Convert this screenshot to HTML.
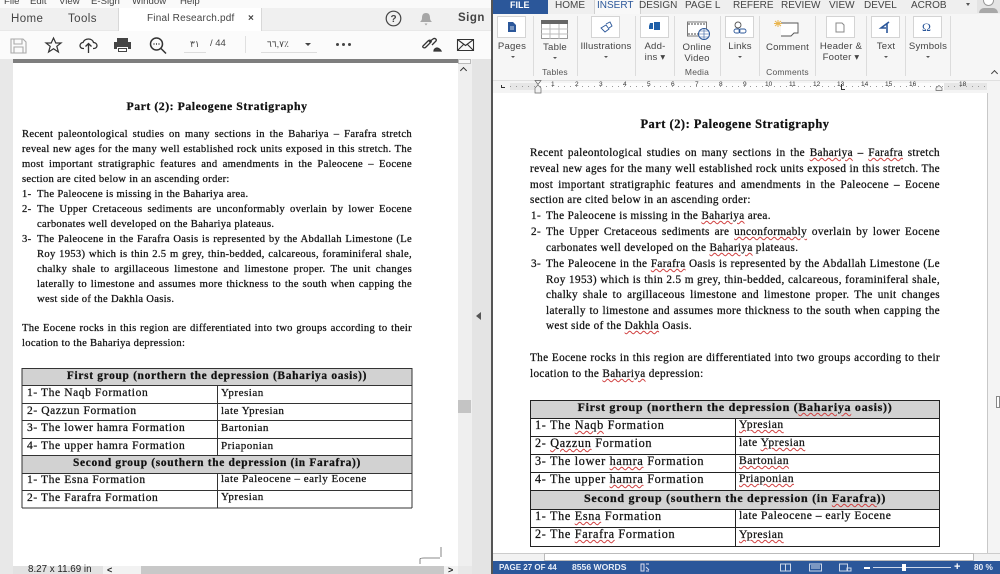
<!DOCTYPE html>
<html><head><meta charset="utf-8"><style>
html,body{margin:0;padding:0;width:1000px;height:574px;overflow:hidden;background:#fff}
body{filter:blur(.3px)}
*{box-sizing:border-box}
.a{position:absolute}
.s{position:absolute;font-family:"Liberation Sans",sans-serif;white-space:nowrap;color:#444}
.t{position:absolute;font-family:"Liberation Serif",serif;white-space:nowrap;color:#111;-webkit-text-stroke:.25px #111}
.L{font-size:10.6px;line-height:14px;letter-spacing:.3px}
.R{font-size:11.2px;line-height:14px;letter-spacing:.35px}
.TL1{font-size:11.5px;line-height:14px;letter-spacing:.6px}
.TL2{font-size:11px;line-height:14px;letter-spacing:.5px}
.HL{font-size:11.4px;line-height:14px;letter-spacing:.68px;font-weight:bold;text-align:center}
.TR1{font-size:12.2px;line-height:14px;letter-spacing:.68px}
.TR2{font-size:11.6px;line-height:14px;letter-spacing:.48px}
.HR{font-size:12px;line-height:14px;letter-spacing:.69px;font-weight:bold;text-align:center}
.j{text-align:justify;text-align-last:justify;white-space:normal}
.c{text-align:center}
.b{font-weight:bold}
u{text-decoration:underline wavy #d04040 .5px;text-underline-offset:1px}
.rb{position:absolute;font-family:"Liberation Sans",sans-serif;font-size:9.6px;color:#444;text-align:center;line-height:11px;letter-spacing:.2px;white-space:nowrap}
.box{position:absolute;top:16px;width:29px;height:22px;background:#fff;border:1px solid #d4d4d4}
.sep{position:absolute;top:16px;width:1px;height:60px;background:#dcdcdc}
.tab{position:absolute;top:0;font-family:"Liberation Sans",sans-serif;font-size:10px;color:#444;line-height:11px;white-space:nowrap}
.rn{position:absolute;font-family:"Liberation Sans",sans-serif;font-size:6.5px;line-height:8px;top:81px;color:#333;white-space:nowrap}
svg{position:absolute;overflow:visible}
</style></head><body>

<!-- LEFT: Acrobat -->
<div class="a" style="left:0;top:0;width:491px;height:574px;background:#e8e8e8"></div>
<div class="a" style="left:0;top:0;width:491px;height:8px;background:#fafafa"></div>
<div class="s" style="left:4px;top:-4px;font-size:9.6px;line-height:12px">File</div>
<div class="s" style="left:30px;top:-4px;font-size:9.6px;line-height:12px">Edit</div>
<div class="s" style="left:59px;top:-4px;font-size:9.6px;line-height:12px">View</div>
<div class="s" style="left:91px;top:-4px;font-size:9.6px;line-height:12px">E-Sign</div>
<div class="s" style="left:132px;top:-4px;font-size:9.6px;line-height:12px">Window</div>
<div class="s" style="left:180px;top:-4px;font-size:9.6px;line-height:12px">Help</div>

<div class="a" style="left:0;top:8px;width:491px;height:22px;background:#f0f0f0"></div>
<div class="a" style="left:118px;top:8px;width:144px;height:23px;background:#fff;border-left:1px solid #d8d8d8;border-right:1px solid #d8d8d8"></div>
<div class="s" style="left:11px;top:12px;font-size:11.5px;line-height:14px;letter-spacing:.4px">Home</div>
<div class="s" style="left:68px;top:12px;font-size:11.5px;line-height:14px;letter-spacing:.4px">Tools</div>
<div class="s" style="left:147px;top:12px;font-size:10px;line-height:14px;letter-spacing:.2px">Final Research.pdf</div>
<div class="s" style="left:248px;top:12px;font-size:10px;line-height:14px;font-weight:bold">×</div>
<svg style="left:385px;top:10px" width="18" height="18" viewBox="0 0 18 18"><circle cx="8.5" cy="8.5" r="7.3" fill="none" stroke="#444" stroke-width="1.2"/><text x="8.5" y="12" font-family="Liberation Sans" font-size="10" font-weight="bold" text-anchor="middle" fill="#444">?</text></svg>
<svg style="left:419px;top:12px" width="16" height="15" viewBox="0 0 16 15"><path d="M7 1c3 0 4 2 4 5 0 2 1 3 2 4H1c1-1 2-2 2-4 0-3 1-5 4-5zM5.500 11.500h3L7 13.500z" fill="#a6a6a6"/></svg>
<div class="s" style="left:458px;top:11px;font-size:11.500px;line-height:15px;font-weight:bold;letter-spacing:.5px">Sign</div>

<div class="a" style="left:0;top:31px;width:491px;height:28px;background:#fbfbfb"></div>
<svg style="left:10px;top:38px" width="17" height="16" viewBox="0 0 17 16" fill="none" stroke="#aaa" stroke-width="1.1"><path d="M1 1h12l3 3v11H1zM4 1v5h8V1M4 15V9h9v6"/></svg>
<svg style="left:44px;top:37px" width="19" height="16" viewBox="0 0 19 16" fill="none" stroke="#333" stroke-width="1.2"><path d="M9.500 1l2.300 5h5.200l-4.200 3.300 1.600 5.700-4.900-3.300L4.600 15l1.600-5.700L2 6h5.200z"/></svg>
<svg style="left:79px;top:38px" width="19" height="15" viewBox="0 0 19 15" fill="none" stroke="#333" stroke-width="1.3"><path d="M5 10.500H4C2 10.500 1 9 1 7.500S2.500 4.500 4 4.500C5 2 7 1 9.500 1s4.500 1.500 5 3.500c2 0 3.500 1.500 3.500 3s-1 3-3.500 3H14M9.500 15V6M6.500 8.500l3-3 3 3"/></svg>
<svg style="left:113px;top:37px" width="19" height="16" viewBox="0 0 19 16"><path d="M4 1h11v4H4zM1 5h17v7h-3v-2H4v2H1zM5 11h9v4H5z" fill="#444"/><rect x="6" y="12" width="7" height="2" fill="#fff"/></svg>
<svg style="left:149px;top:37px" width="19" height="17" viewBox="0 0 19 17" fill="none" stroke="#333" stroke-width="1.5"><circle cx="7.500" cy="7" r="6"/><path d="M12 11.500l5 5M4.500 7h1M7 7h1M9.500 7h1"/></svg>
<div class="s" style="left:190px;top:38px;font-size:9px;line-height:12px">٣١</div>
<div class="a" style="left:184px;top:52px;width:22px;height:1px;background:#ddd"></div>
<div class="s" style="left:210px;top:38px;font-size:9.500px;line-height:12px">/ 44</div>
<div class="a" style="left:245px;top:36px;width:1px;height:17px;background:#e0e0e0"></div>
<div class="s" style="left:267px;top:38px;font-size:9px;line-height:12px">٦٦,٧٪</div>
<div class="a" style="left:261px;top:52px;width:56px;height:1px;background:#ddd"></div>
<div class="a" style="left:305px;top:43px;border:3px solid transparent;border-top:3px solid #444"></div>
<div class="a" style="left:336px;top:43px;width:3px;height:3px;background:#444;border-radius:2px;box-shadow:6px 0 0 #444,12px 0 0 #444"></div>
<svg style="left:421px;top:37px" width="21" height="15" viewBox="0 0 21 15" fill="none" stroke="#333" stroke-width="1.300"><path d="M2 9l5-5c2-2 4 0 3 1l-5 5c-2 2-4 0-3-1zM8 5l4-3c2-1.500 4 .5 3 2l-4 4"/><path d="M13 14c0-2 2-3 3-3s3 1 4 3z" fill="#444"/></svg>
<svg style="left:457px;top:39px" width="18" height="12" viewBox="0 0 18 12" fill="none" stroke="#333" stroke-width="1.100"><path d="M.5.5h16v11H.5zM.5.5l8 6 8-6M.5 11.500l6-6M16.500 11.500l-6-6"/></svg>

<!-- left doc area -->
<div class="a" style="left:13px;top:59px;width:445px;height:515px;background:#fff"></div>
<div class="a" style="left:13px;top:59px;width:445px;height:4px;background:#7e7e7e"></div>
<div class="a" style="left:458px;top:59px;width:14px;height:507px;background:#efefef"></div>
<div class="a" style="left:458px;top:59px;width:13px;height:5px;background:#f8f8f8;border:1px solid #bbb"></div>
<div class="a" style="left:461px;top:68px;width:5px;height:5px;border-left:1.500px solid #333;border-top:1.500px solid #333;transform:rotate(45deg)"></div>
<div class="a" style="left:458px;top:400px;width:13px;height:13px;background:#c4c4c4"></div>
<div class="a" style="left:472px;top:59px;width:19px;height:515px;background:#e4e4e4"></div>
<div class="a" style="left:476px;top:312px;border:4px solid transparent;border-right:5px solid #555;border-left:0"></div>
<div class="a" style="left:13px;top:566px;width:90px;height:8px;background:#e2e2e2"></div>
<div class="a" style="left:103px;top:566px;width:355px;height:8px;background:#f2f2f2"></div>
<div class="a" style="left:141px;top:566px;width:303px;height:8px;background:#c8c8c8"></div>
<div class="s" style="left:28px;top:564px;font-size:9.800px;line-height:12px;color:#222">8.27 x 11.69 in</div>
<div class="s" style="left:107px;top:564px;font-size:9px;line-height:12px;font-weight:bold;color:#222">&lt;</div>
<div class="s" style="left:448px;top:564px;font-size:9px;line-height:12px;font-weight:bold;color:#222">&gt;</div>
<svg style="left:418px;top:546px" width="24" height="20" viewBox="0 0 24 20" fill="none" stroke="#666" stroke-width=".8"><path d="M2 18v-5c0-1 2-1 4-1h16M23 1v10"/></svg>

<div class="t b c" style="left:22px;top:99px;width:390px;font-size:11.8px;line-height:14px;letter-spacing:.53px">Part (2): Paleogene Stratigraphy</div>
<div class="t L j" style="left:22px;top:128px;width:390px">Recent paleontological studies on many sections in the Bahariya – Farafra stretch</div>
<div class="t L j" style="left:22px;top:143px;width:390px">reveal new ages for the many well established rock units exposed in this stretch. The</div>
<div class="t L j" style="left:22px;top:158px;width:390px">most important stratigraphic features and amendments in the Paleocene – Eocene</div>
<div class="t L" style="left:22px;top:173px">section are cited below in an ascending order:</div>
<div class="t L" style="left:22px;top:188px">1-</div><div class="t L" style="left:37px;top:188px">The Paleocene is missing in the Bahariya area.</div>
<div class="t L" style="left:22px;top:203px">2-</div><div class="t L j" style="left:37px;top:203px;width:375px">The Upper Cretaceous sediments are unconformably overlain by lower Eocene</div>
<div class="t L" style="left:37px;top:218px">carbonates well developed on the Bahariya plateaus.</div>
<div class="t L" style="left:22px;top:233px">3-</div><div class="t L j" style="left:37px;top:233px;width:375px">The Paleocene in the Farafra Oasis is represented by the Abdallah Limestone (Le</div>
<div class="t L j" style="left:37px;top:248px;width:375px">Roy 1953) which is thin 2.5 m grey, thin-bedded, calcareous, foraminiferal shale,</div>
<div class="t L j" style="left:37px;top:263px;width:375px">chalky shale to argillaceous limestone and limestone proper. The unit changes</div>
<div class="t L j" style="left:37px;top:278px;width:375px">laterally to limestone and assumes more thickness to the south when capping the</div>
<div class="t L" style="left:37px;top:293px">west side of the Dakhla Oasis.</div>
<div class="t L j" style="left:22px;top:322px;width:390px">The Eocene rocks in this region are differentiated into two groups according to their</div>
<div class="t L" style="left:22px;top:337px">location to the Bahariya depression:</div>

<svg style="left:0;top:0" width="1000" height="574" shape-rendering="crispEdges">
<rect x="22" y="368" width="390" height="17" fill="#d2d2d2"/><rect x="22" y="456" width="390" height="17" fill="#d2d2d2"/>
<g stroke="#333" stroke-width="1" fill="none">
<path d="M22 368.500H412M22 385.500H412M22 403.500H412M22 420.500H412M22 438.500H412M22 455.500H412M22 473.500H412M22 490.500H412M22 508H412"/>
<path d="M22 368V508M412 368V508M217.500 385V456M217.500 473V508"/></g>
<rect x="530" y="400" width="410" height="18" fill="#d2d2d2"/><rect x="530" y="490" width="410" height="19" fill="#d2d2d2"/>
</svg>
<div class="t HL" style="left:22px;top:369px;width:390px">First group (northern the depression (Bahariya oasis))</div>
<div class="t TL1" style="left:27px;top:386px">1- The Naqb Formation</div><div class="t TL2" style="left:221px;top:386px">Ypresian</div>
<div class="t TL1" style="left:27px;top:404px">2- Qazzun Formation</div><div class="t TL2" style="left:221px;top:404px">late Ypresian</div>
<div class="t TL1" style="left:27px;top:421px">3- The lower hamra Formation</div><div class="t TL2" style="left:221px;top:421px">Bartonian</div>
<div class="t TL1" style="left:27px;top:439px">4- The upper hamra Formation</div><div class="t TL2" style="left:221px;top:439px">Priaponian</div>
<div class="t HL" style="left:22px;top:456px;width:390px">Second group (southern the depression (in Farafra))</div>
<div class="t TL1" style="left:27px;top:473px">1- The Esna Formation</div><div class="t TL2" style="left:221px;top:472px">late Paleocene – early Eocene</div>
<div class="t TL1" style="left:27px;top:491px">2- The Farafra Formation</div><div class="t TL2" style="left:221px;top:490px">Ypresian</div>

<!-- RIGHT: Word -->
<div class="a" style="left:491px;top:0;width:2px;height:574px;background:#555"></div>
<div class="a" style="left:493px;top:0;width:507px;height:80px;background:#f6f6f6"></div>
<div class="a" style="left:493px;top:0;width:507px;height:14px;background:#efefef"></div>
<div class="a" style="left:493px;top:0;width:55px;height:14px;background:#2b579a"></div>
<div class="tab" style="left:510px;color:#fff;font-weight:bold;font-size:9px">FILE</div>
<div class="a" style="left:594px;top:0;width:47px;height:14px;background:#f8f8f8;border-left:1px solid #d0d0d0;border-right:1px solid #d0d0d0"></div>
<div class="tab" style="left:555px">HOME</div>
<div class="tab" style="left:597px;color:#2b579a">INSERT</div>
<div class="tab" style="left:639px">DESIGN</div>
<div class="tab" style="left:685px">PAGE L</div>
<div class="tab" style="left:733px">REFERE</div>
<div class="tab" style="left:781px">REVIEW</div>
<div class="tab" style="left:829px">VIEW</div>
<div class="tab" style="left:864px">DEVEL</div>
<div class="tab" style="left:911px">ACROB</div>
<div class="a" style="left:966px;top:3px;border:2px solid transparent;border-top:3px solid #555"></div>
<div class="a" style="left:977px;top:0;width:23px;height:13px;background:#e4e4e4"></div>
<div class="a" style="left:983px;top:0;width:11px;height:6px;background:#fff;border:1px solid #999;border-top:0;border-radius:0 0 6px 6px"></div>
<div class="a" style="left:979px;top:8px;width:19px;height:5px;background:#a8a8a8;border-radius:5px 5px 0 0"></div>

<div class="box" style="left:497px"></div>
<div class="box" style="left:591px"></div>
<div class="box" style="left:640px"></div>
<div class="box" style="left:725px"></div>
<div class="box" style="left:826px"></div>
<div class="box" style="left:871px"></div>
<div class="box" style="left:913px"></div>
<div class="sep" style="left:533px"></div><div class="sep" style="left:577px"></div><div class="sep" style="left:635px"></div><div class="sep" style="left:674px"></div><div class="sep" style="left:720px"></div><div class="sep" style="left:759px"></div><div class="sep" style="left:815px"></div><div class="sep" style="left:866px"></div><div class="sep" style="left:905px"></div><div class="sep" style="left:950px"></div>

<svg style="left:507px;top:21px" width="10" height="12" viewBox="0 0 10 12"><path d="M1 1h5l3 3v7H1z" fill="#2b579a"/><path d="M3 6h4M3 8h4" stroke="#fff" stroke-width=".8"/></svg>
<svg style="left:541px;top:20px" width="27" height="19" viewBox="0 0 27 19"><rect x=".5" y=".5" width="26" height="18" fill="#fff" stroke="#999"/><rect x="0" y="0" width="27" height="4" fill="#666"/><path d="M0 9h27M0 14h27M9 4v15M18 4v15" stroke="#bbb"/></svg>
<svg style="left:600px;top:21px" width="13" height="12" viewBox="0 0 13 12" fill="none" stroke="#2b579a" stroke-width=".9"><path d="M1 7l5-3 3 4-4 3zM6 3l4-2 2 4-3 2"/></svg>
<svg style="left:648px;top:20px" width="13" height="12" viewBox="0 0 13 12"><path d="M1 6l1-3h3v6H1zM6 2h6v8H6z" fill="#1f5fa8"/></svg>
<svg style="left:687px;top:20px" width="24" height="20" viewBox="0 0 24 20"><rect x=".5" y="2" width="19" height="14" fill="#fff" stroke="#777"/><path d="M1 4h18M1 14h18" stroke="#444" stroke-dasharray="2 1"/><circle cx="17" cy="14" r="5.500" fill="#fff" stroke="#2b579a"/><path d="M11.500 14h11M17 8.500v11M13 11h8M13 17h8" stroke="#2b579a" stroke-width=".6"/></svg>
<svg style="left:733px;top:21px" width="14" height="13" viewBox="0 0 14 13" fill="none" stroke="#555" stroke-width=".9"><circle cx="5" cy="4" r="3"/><rect x="1" y="8" width="6" height="4" rx="2" stroke="#2b579a"/><rect x="6" y="8" width="7" height="4" rx="2" stroke="#2b579a"/></svg>
<svg style="left:773px;top:19px" width="26" height="18" viewBox="0 0 26 18"><path d="M8 4h17v10h-4l-3 3H8" fill="#fff" stroke="#555" stroke-width=".9"/><path d="M5 1v7M1 4.500h8M2 2l6 5M8 2L2 7" stroke="#e9b44c" stroke-width="1"/></svg>
<svg style="left:835px;top:22px" width="10" height="11" viewBox="0 0 10 11" fill="none" stroke="#888"><path d="M1 1h6l2 2v7H1z"/></svg>
<svg style="left:880px;top:21px" width="11" height="13" viewBox="0 0 11 13"><path d="M9 1L1 7h5M7 3v9" stroke="#2b579a" stroke-width="1.600" fill="none"/></svg>
<div class="s" style="left:922px;top:20px;font-size:12px;line-height:15px;color:#2b579a;font-family:'Liberation Serif'">Ω</div>

<div class="rb" style="left:492px;width:40px;top:41px">Pages</div>
<div class="rb" style="left:537px;width:36px;top:42px">Table</div>
<div class="rb" style="left:578px;width:56px;top:41px">Illustrations</div>
<div class="rb" style="left:636px;width:38px;top:41px">Add-<br>ins ▾</div>
<div class="rb" style="left:676px;width:42px;top:42px">Online<br>Video</div>
<div class="rb" style="left:721px;width:38px;top:41px">Links</div>
<div class="rb" style="left:760px;width:55px;top:42px">Comment</div>
<div class="rb" style="left:816px;width:50px;top:41px">Header &amp;<br>Footer ▾</div>
<div class="rb" style="left:867px;width:38px;top:41px">Text</div>
<div class="rb" style="left:906px;width:44px;top:41px">Symbols</div>
<div class="rb" style="left:537px;width:36px;top:67px;font-size:8.500px;color:#555">Tables</div>
<div class="rb" style="left:676px;width:42px;top:67px;font-size:8.500px;color:#555">Media</div>
<div class="rb" style="left:760px;width:55px;top:67px;font-size:8.500px;color:#555">Comments</div>
<div class="a" style="left:511px;top:56px;border:2px solid transparent;border-top:2.500px solid #555"></div>
<div class="a" style="left:553px;top:57px;border:2px solid transparent;border-top:2.500px solid #555"></div>
<div class="a" style="left:604px;top:56px;border:2px solid transparent;border-top:2.500px solid #555"></div>
<div class="a" style="left:738px;top:56px;border:2px solid transparent;border-top:2.500px solid #555"></div>
<div class="a" style="left:884px;top:56px;border:2px solid transparent;border-top:2.500px solid #555"></div>
<div class="a" style="left:926px;top:56px;border:2px solid transparent;border-top:2.500px solid #555"></div>
<div class="a" style="left:992px;top:71px;width:5px;height:5px;border-left:1px solid #444;border-top:1px solid #444;transform:rotate(45deg)"></div>

<!-- ruler -->
<div class="a" style="left:493px;top:80px;width:507px;height:13px;background:#f4f4f4;border-top:1px solid #e0e0e0"></div>
<div class="a" style="left:510px;top:83px;width:27px;height:7px;background:#e6e6e6"></div>
<div class="a" style="left:538px;top:83px;width:406px;height:7px;background:#fdfdfd"></div>
<div class="a" style="left:944px;top:83px;width:43px;height:7px;background:#e6e6e6"></div>
<div class="a" style="left:510px;top:86px;width:477px;height:1px;background:repeating-linear-gradient(90deg,#999 0 1px,transparent 1px 6px)"></div>
<div class="a" style="left:501px;top:85px;width:4px;height:3px;border-left:1px solid #333;border-bottom:1px solid #333"></div>
<svg style="left:534px;top:80px" width="8" height="14" viewBox="0 0 8 14" fill="#f2f2f2" stroke="#666" stroke-width=".7"><path d="M1 .5h6L4 4.500zM4 5l3 3v5H1V8z"/></svg>
<svg style="left:935px;top:85px" width="8" height="6" viewBox="0 0 8 6" fill="#f2f2f2" stroke="#666" stroke-width=".7"><path d="M4 .5L7 3v2.500H1V3z"/></svg>
<div class="rn" style="left:551px">1</div><div class="rn" style="left:575px">2</div><div class="rn" style="left:599px">3</div><div class="rn" style="left:623px">4</div><div class="rn" style="left:647px">5</div><div class="rn" style="left:671px">6</div><div class="rn" style="left:695px">7</div><div class="rn" style="left:719px">8</div><div class="rn" style="left:743px">9</div><div class="rn" style="left:765px">10</div><div class="rn" style="left:789px">11</div><div class="rn" style="left:813px">12</div><div class="rn" style="left:837px">13</div><div class="rn" style="left:861px">14</div><div class="rn" style="left:885px">15</div><div class="rn" style="left:909px">16</div><div class="rn" style="left:959px">18</div>
<div class="a" style="left:841px;top:84px;width:4px;height:6px;border-left:1px solid #333;border-bottom:1px solid #333"></div>

<!-- word doc chrome -->
<div class="a" style="left:987px;top:93px;width:1px;height:460px;background:#c8c8c8"></div>
<div class="a" style="left:988px;top:93px;width:12px;height:468px;background:#f4f4f4"></div>
<div class="a" style="left:996px;top:396px;width:4px;height:12px;background:#fff;border:1px solid #888"></div>
<div class="a" style="left:493px;top:553px;width:507px;height:8px;background:#f2f2f2;border-top:1px solid #ccc"></div>
<div class="a" style="left:544px;top:553px;width:430px;height:8px;background:#fff;border:1px solid #bbb"></div>
<div class="a" style="left:493px;top:561px;width:507px;height:13px;background:#2b579a"></div>
<div class="s" style="left:499px;top:562px;font-size:8px;line-height:11px;color:#e8eef8;font-weight:bold">PAGE 27 OF 44</div>
<div class="s" style="left:572px;top:562px;font-size:8.600px;line-height:11px;color:#e8eef8;font-weight:bold">8556 WORDS</div>
<svg style="left:640px;top:563px" width="10" height="9" viewBox="0 0 10 9" fill="none" stroke="#dde"><path d="M1 1h3v7H1zM6 1h3M6 4l3 3M6 8h3"/></svg>
<svg style="left:780px;top:563px" width="80" height="9" viewBox="0 0 80 9" fill="none" stroke="#cdd8ea"><path d="M.5 1h5v7h-5zM5.500 1h5v7h-5zM29.500 1h12v7h-12zM31 3h9M31 5h9M59.500 1h8v7h-8zM67 5h4v3h-4z"/></svg>
<div class="a" style="left:864px;top:567px;width:6px;height:1.500px;background:#fff"></div>
<div class="a" style="left:873px;top:567px;width:78px;height:1px;background:#cdd8ea"></div>
<div class="a" style="left:902px;top:564px;width:4px;height:7px;background:#fff"></div>
<div class="s" style="left:954px;top:561px;font-size:11px;line-height:12px;color:#fff;font-weight:bold">+</div>
<div class="s" style="left:974px;top:562px;font-size:8.300px;line-height:11px;color:#e8eef8;font-weight:bold">80 %</div>

<!-- word doc text -->
<div class="t b c" style="left:530px;top:117px;width:410px;font-size:12.400px;line-height:14px;letter-spacing:.52px">Part (2): Paleogene Stratigraphy</div>
<div class="t R j" style="left:530px;top:146px;width:410px">Recent paleontological studies on many sections in the <u>Bahariya</u> – <u>Farafra</u> stretch</div>
<div class="t R j" style="left:530px;top:162px;width:410px">reveal new ages for the many well established rock units exposed in this stretch. The</div>
<div class="t R j" style="left:530px;top:178px;width:410px">most important stratigraphic features and amendments in the Paleocene – Eocene</div>
<div class="t R" style="left:530px;top:193px">section are cited below in an ascending order:</div>
<div class="t R" style="left:531px;top:209px">1-</div><div class="t R" style="left:546px;top:209px">The Paleocene is missing in the <u>Bahariya</u> area.</div>
<div class="t R" style="left:531px;top:225px">2-</div><div class="t R j" style="left:546px;top:225px;width:394px">The Upper Cretaceous sediments are <u>unconformably</u> overlain by lower Eocene</div>
<div class="t R" style="left:546px;top:241px">carbonates well developed on the <u>Bahariya</u> plateaus.</div>
<div class="t R" style="left:531px;top:257px">3-</div><div class="t R j" style="left:546px;top:257px;width:394px">The Paleocene in the <u>Farafra</u> Oasis is represented by the Abdallah Limestone (Le</div>
<div class="t R j" style="left:546px;top:273px;width:394px">Roy 1953) which is thin 2.5 m grey, thin-bedded, calcareous, foraminiferal shale,</div>
<div class="t R j" style="left:546px;top:288px;width:394px">chalky shale to argillaceous limestone and limestone proper. The unit changes</div>
<div class="t R j" style="left:546px;top:304px;width:394px">laterally to limestone and assumes more thickness to the south when capping the</div>
<div class="t R" style="left:546px;top:319px">west side of the <u>Dakhla</u> Oasis.</div>
<div class="t R j" style="left:530px;top:351px;width:410px">The Eocene rocks in this region are differentiated into two groups according to their</div>
<div class="t R" style="left:530px;top:367px">location to the <u>Bahariya</u> depression:</div>

<svg style="left:0;top:0" width="1000" height="574" shape-rendering="crispEdges"><g stroke="#222" fill="none">
<path d="M530 400.500H940M530 418.500H940M530 436.500H940M530 454.500H940M530 472.500H940M530 490.500H940M530 509.500H940M530 527.500H940M530 546.500H940"/>
<path d="M530.500 400V547M939.500 400V547M735.500 418V490M735.500 509V547"/></g></svg>
<div class="t HR" style="left:530px;top:400px;width:410px">First group (northern the depression (<u>Bahariya</u> oasis))</div>
<div class="t TR1" style="left:535px;top:418px">1- The <u>Naqb</u> Formation</div><div class="t TR2" style="left:739px;top:418px"><u>Ypresian</u></div>
<div class="t TR1" style="left:535px;top:436px">2- <u>Qazzun</u> Formation</div><div class="t TR2" style="left:739px;top:436px">late <u>Ypresian</u></div>
<div class="t TR1" style="left:535px;top:454px">3- The lower <u>hamra</u> Formation</div><div class="t TR2" style="left:739px;top:454px"><u>Bartonian</u></div>
<div class="t TR1" style="left:535px;top:472px">4- The upper <u>hamra</u> Formation</div><div class="t TR2" style="left:739px;top:472px"><u>Priaponian</u></div>
<div class="t HR" style="left:530px;top:491px;width:410px">Second group (southern the depression (in <u>Farafra</u>))</div>
<div class="t TR1" style="left:535px;top:509px">1- The <u>Esna</u> Formation</div><div class="t TR2" style="left:739px;top:509px">late Paleocene – early Eocene</div>
<div class="t TR1" style="left:535px;top:527px">2- The <u>Farafra</u> Formation</div><div class="t TR2" style="left:739px;top:528px"><u>Ypresian</u></div>
</body></html>
